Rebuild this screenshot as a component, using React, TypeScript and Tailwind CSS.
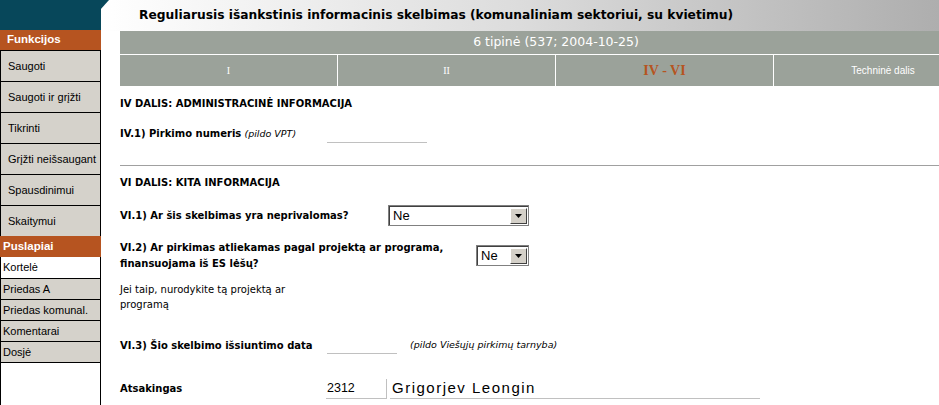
import React from "react";

const sans = "font-['Liberation_Sans',Arial,sans-serif]";
const dv = "font-['DejaVu_Sans',Verdana,sans-serif]";

function SideItem({ label, h = "h-[31px]" }: { label: string; h?: string }) {
  return (
    <div className={`${h} border-t border-black bg-[#d5d2cb] flex items-center pl-[7px] text-[11px] text-black`}>
      {label}
    </div>
  );
}

function SmallItem({ label }: { label: string }) {
  return (
    <div className="h-[21px] border-t border-black bg-[#d5d2cb] flex items-center pl-[2px] text-[11px] text-black">
      {label}
    </div>
  );
}

function Select({ w, text }: { w: string; text: string }) {
  return (
    <div className={`${w} h-[21px] border border-[#808080] bg-white flex ${sans}`}>
      <div className="flex-1 border-t border-l border-[#404040] flex items-center pl-[3px] text-[13px] text-black">
        {text}
      </div>
      <div className="w-[18px] border-t border-[#404040] flex items-stretch pr-[1px] pb-[1px] pt-[1px]">
        <div className="flex-1 bg-[#d4d0c8] border-t border-l border-white border-r border-b border-r-[#404040] border-b-[#404040] flex items-center justify-center">
          <svg width="7" height="4" viewBox="0 0 7 4">
            <path d="M0 0H7L3.5 4Z" fill="#000" />
          </svg>
        </div>
      </div>
    </div>
  );
}

export default function App() {
  return (
    <div className={`w-[939px] h-[405px] overflow-hidden flex bg-white ${sans}`}>
      {/* Sidebar */}
      <div className="w-[101px] shrink-0 flex flex-col relative">
        <div className="h-[30px] bg-[#07475a]" />
        <svg className="absolute left-[100px] top-0" width="10" height="11" viewBox="0 0 10 11">
          <path d="M0 0H9L0 10Z" fill="#07475a" />
        </svg>
        <div className="h-[20px] bg-[#b65420] text-white font-bold text-[11.5px] flex items-center pl-[7px]">
          Funkcijos
        </div>
        <div className="flex-1 flex flex-col border-l border-r border-black">
          <SideItem label="Saugoti" />
          <SideItem label="Saugoti ir grįžti" />
          <SideItem label="Tikrinti" />
          <SideItem label="Grįžti neišsaugant" />
          <SideItem label="Spausdinimui" />
          <SideItem label="Skaitymui" />
          <div className="h-[21px] bg-[#b65420] text-white font-bold text-[11.5px] flex items-center pl-[3px] -mx-px px-px">
            Puslapiai
          </div>
          <div className="h-[21px] bg-white flex items-center pl-[2px] text-[11px] text-black">Kortelė</div>
          <SmallItem label="Priedas A" />
          <SmallItem label="Priedas komunal." />
          <SmallItem label="Komentarai" />
          <SmallItem label="Dosjė" />
          <div className="flex-1 border-t border-black bg-white" />
        </div>
      </div>

      {/* Main */}
      <div className="flex-1 min-w-0 flex flex-col overflow-hidden">
        <div className="h-[31px] shrink-0 bg-gradient-to-r from-white via-[#dcdcdc] to-[#aeaeae] flex items-center pl-[38px]">
          <span className={`text-[12.25px] font-bold text-black whitespace-nowrap ${dv}`}>
            Reguliarusis išankstinis informacinis skelbimas (komunaliniam sektoriui, su kvietimu)
          </span>
        </div>
        <div className="pl-[19px]">
          <div className="w-[872px]">
            <div className={`h-[24px] bg-[#9ba29a] flex items-center justify-center text-white text-[12.5px] border-b border-white ${dv}`}>
              6 tipinė (537; 2004-10-25)
            </div>
            <div className="h-[31px] grid grid-cols-4 bg-[#9ba29a]">
              <div className="border-r border-white flex items-center justify-center text-white text-[10px] font-['Liberation_Serif',serif]">I</div>
              <div className="border-r border-white flex items-center justify-center text-white text-[10px] font-['Liberation_Serif',serif]">II</div>
              <div className="border-r border-white flex items-center justify-center text-[#b65420] text-[14px] font-bold font-['Liberation_Serif',serif]">IV - VI</div>
              <div className="flex items-center justify-center text-white text-[10px]">Techninė dalis</div>
            </div>
          </div>
        </div>

        <div className={`text-black text-[10px] ${dv}`}>
          <div className="pl-[19px] mt-[7px] h-[20px] flex items-center font-bold">
            IV DALIS: ADMINISTRACINĖ INFORMACIJA
          </div>
          <div className="pl-[19px] mt-[11px] h-[20px] flex items-center">
            <div className="w-[207px] shrink-0">
              <span className="font-bold">IV.1) Pirkimo numeris</span> <i className="text-[9.5px]">(pildo VPT)</i>
            </div>
            <div className="w-[100px] h-[20px] border-b border-[#c0c0c0] mt-[-2px]" />
          </div>
          <div className="ml-[19px] mt-[21px] h-px bg-[#a0a0a0]" />
          <div className="pl-[19px] mt-[6px] h-[20px] flex items-center font-bold">
            VI DALIS: KITA INFORMACIJA
          </div>
          <div className="pl-[19px] mt-[12px] h-[23px] flex items-center">
            <div className="w-[268px] shrink-0 font-bold">VI.1) Ar šis skelbimas yra neprivalomas?</div>
            <Select w="w-[141px]" text="Ne" />
          </div>
          <div className="pl-[19px] mt-[13px] h-[32px] flex items-start">
            <div className="w-[356px] shrink-0 font-bold leading-[16px]">
              VI.2) Ar pirkimas atliekamas pagal projektą ar programa,
              <br />
              finansuojama iš ES lėšų?
            </div>
            <div className="mt-[5px]">
              <Select w="w-[53px]" text="Ne" />
            </div>
          </div>
          <div className="pl-[19px] mt-[10px] h-[30px] leading-[15px]">
            Jei taip, nurodykite tą projektą ar
            <br />
            programą
          </div>
          <div className="pl-[19px] mt-[23px] h-[20px] flex items-center">
            <div className="w-[207px] shrink-0 font-bold">VI.3) Šio skelbimo išsiuntimo data</div>
            <div className="w-[70px] h-[20px] border-b border-[#c0c0c0] mt-[-2px] shrink-0" />
            <i className="ml-[13px] text-[9.5px]">(pildo Viešųjų pirkimų tarnyba)</i>
          </div>
          <div className="pl-[19px] mt-[23px] h-[20px] flex items-center">
            <div className="w-[206px] shrink-0 font-bold">Atsakingas</div>
            <div className={`w-[61px] h-[20px] border-b border-[#c0c0c0] border-r border-r-[#c0c0c0] mt-[2px] shrink-0 flex items-center pl-[1px] text-[12.5px] ${sans}`}>
              2312
            </div>
            <div className={`ml-[3px] w-[370px] h-[20px] border-b border-[#c0c0c0] mt-[2px] flex items-center pl-[2px] text-[15px] tracking-[1.5px] ${sans}`}>
              Grigorjev Leongin
            </div>
          </div>
        </div>
      </div>
    </div>
  );
}
